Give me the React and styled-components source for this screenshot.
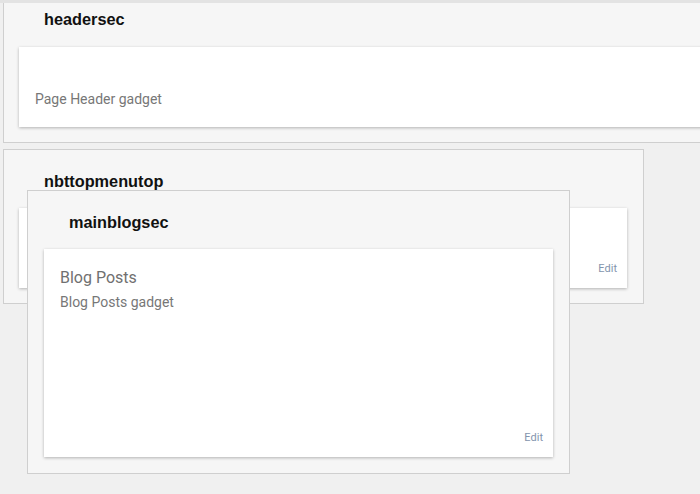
import React from "react";
import styled, { createGlobalStyle } from "styled-components";

const Global = createGlobalStyle`
  html, body { margin: 0; padding: 0; background: #f0f0f0; }
  body { width: 700px; height: 494px; overflow: hidden; }
`;

const Page = styled.div`
  position: relative;
  width: 700px;
  height: 494px;
  overflow: hidden;
  background: #f0f0f0;
  border-top: 3px solid #e3e3e3;
  box-sizing: border-box;
  padding-left: 3px;
  display: flex;
  flex-direction: column;
  gap: 6px;
`;

const Section = styled.div`
  box-sizing: border-box;
  width: ${(p) => p.$width}px;
  flex: none;
  background: #f6f6f6;
  border: 1px solid #cfcfcf;
  ${(p) => (p.$clipped ? "border-top: none;" : "")}
  padding: ${(p) => p.$padTop}px 16px 15px 15px;
  display: flex;
  flex-direction: column;
`;

const Floating = styled(Section)`
  position: absolute;
  left: 27px;
  top: 187px;
  height: 284px;
  padding-right: 16px;
  padding-left: 16px;
`;

const Title = styled.div`
  font-family: "Liberation Sans", Arial, sans-serif;
  font-weight: bold;
  font-size: 16.3px;
  line-height: 18px;
  color: #111;
  padding-left: 25px;
  height: ${(p) => p.$h}px;
`;

const Card = styled.div`
  position: relative;
  background: #fff;
  height: ${(p) => p.$h}px;
  box-shadow: 0 1px 3px rgba(0, 0, 0, 0.28);
  box-sizing: border-box;
  padding: ${(p) => p.$padTop}px 16px 0 16px;
  font-family: Roboto, "Noto Sans", sans-serif;
  display: flex;
  flex-direction: column;
`;

const CardTitle = styled.div`
  font-size: 16px;
  line-height: 20px;
  color: #707070;
  margin-bottom: 6px;
`;

const Gadget = styled.div`
  font-size: 14px;
  line-height: 17px;
  color: #777;
`;

const Edit = styled.div`
  margin-top: auto;
  align-self: flex-end;
  margin-right: -6px;
  margin-bottom: 13px;
  font-size: 11px;
  line-height: 13px;
  color: #8394ad;
`;

export default function App() {
  return (
    <>
      <Global />
      <Page>
        <Section $width={720} $clipped $padTop={7}>
          <Title $h={37}>headersec</Title>
          <Card $h={80} $padTop={44}>
            <Gadget>Page Header gadget</Gadget>
          </Card>
        </Section>
        <Section $width={641} $padTop={22}>
          <Title $h={36}>nbttopmenutop</Title>
          <Card $h={80} $padTop={0}>
            <Edit>Edit</Edit>
          </Card>
        </Section>
        <Floating $width={543} $padTop={22}>
          <Title $h={36}>mainblogsec</Title>
          <Card $h={208} $padTop={19}>
            <CardTitle>Blog Posts</CardTitle>
            <Gadget>Blog Posts gadget</Gadget>
            <Edit>Edit</Edit>
          </Card>
        </Floating>
      </Page>
    </>
  );
}
